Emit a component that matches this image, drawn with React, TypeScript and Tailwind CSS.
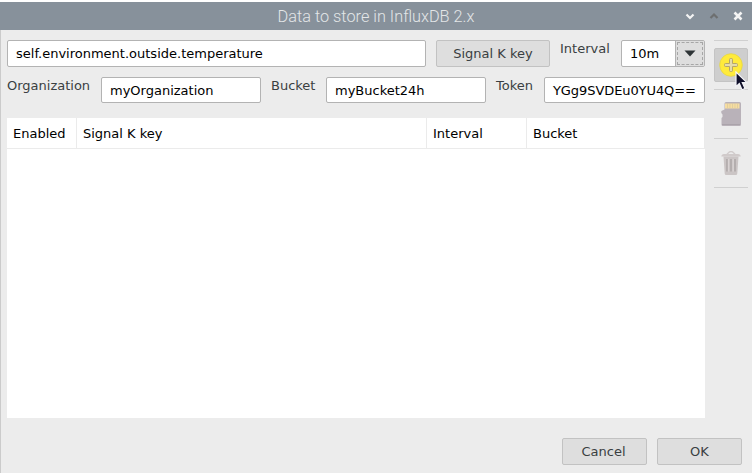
import type { ReactNode } from "react";

function Field({ className, children }: { className: string; children: ReactNode }) {
  return (
    <div
      className={`flex shrink-0 items-center overflow-hidden whitespace-nowrap rounded-xs border border-[#b3b3b3] bg-white px-2 text-black ${className}`}
    >
      {children}
    </div>
  );
}

function Button({ className, children }: { className: string; children: ReactNode }) {
  return (
    <button
      className={`flex h-[27px] shrink-0 items-center justify-center rounded-xs border border-[#c2c2c2] bg-[#dedede] text-[#3a3f42] ${className}`}
    >
      {children}
    </button>
  );
}

function TitleBar() {
  return (
    <header className="relative flex h-7 items-center justify-center bg-[#87919b]">
      <h1 className="pt-0.5 font-['Roboto'] text-[16.3px] font-light text-[#e3e6e8]">Data to store in InfluxDB 2.x</h1>
      <div className="absolute right-2 top-2 flex gap-3">
        <svg width="12" height="12" viewBox="0 0 12 12" fill="none" stroke="#f4f4f4" strokeWidth="2.2">
          <path d="M2.500 4.500 6 8l3.500-3.500" />
        </svg>
        <svg width="12" height="12" viewBox="0 0 12 12" fill="none" stroke="#6d6f70" strokeWidth="2.2">
          <path d="M2.500 8 6 4.500 9.500 8" />
        </svg>
        <svg width="12" height="12" viewBox="0 0 12 12" fill="none" stroke="#f4f4f4" strokeWidth="2.600">
          <path d="m2.500 2.500 7 7m0-7-7 7" />
        </svg>
      </div>
    </header>
  );
}

function Toolbar() {
  return (
    <aside className="flex w-[34px] shrink-0 flex-col border-t border-[#d0d0d0]">
      <div className="relative mt-[7px] flex h-[34px] items-center justify-center rounded-xs border border-[#c4c4c4] bg-[#cecece]">
        <svg width="24" height="24" viewBox="0 0 24 24">
          <circle cx="12" cy="12" r="11.3" fill="#ffeb3b" stroke="#e5d545" strokeWidth=".8" />
          <path
            d="M10.500 6.500q0-1 1-1h1q1 0 1 1v4h4q1 0 1 1v1q0 1-1 1h-4v4q0 1-1 1h-1q-1 0-1-1v-4h-4q-1 0-1-1v-1q0-1 1-1h4z"
            fill="#e4dcaa"
            stroke="#b5a668"
            strokeWidth="1"
          />
        </svg>
        <svg className="absolute left-5 top-[22px] z-10" width="14" height="21" viewBox="0 0 14 21">
          <path
            d="M1 1v14.600l3.300-3 2.700 6.200 3-1.300-2.700-5.900h4.600z"
            fill="#10102a"
            stroke="#f4f4f8"
            strokeWidth="1.200"
          />
        </svg>
      </div>
      <div className="mt-[7px] flex h-[49px] items-center justify-center border-t border-[#d0d0d0]">
        <svg width="20" height="24" viewBox="0 0 20 24">
          <path
            d="M5 0h13.500q1.500 0 1.500 1.500v21q0 1.500-1.500 1.500H2q-1.500 0-1.500-1.500V16l1-1v-2.500L.3 11V9L3.500 7.500V1.500Q3.500 0 5 0z"
            fill="#b9b2b9"
          />
          <path d="M4 1.500h14.500V6.500H4z" fill="#f6dda0" />
          <path d="M6.500 1.500v4.500M9 1.500v4.500M11.500 1.500v4.500M14 1.500v4.500M16.500 1.500v4.500" stroke="#d8c79e" strokeWidth=".7" />
          <path d="M1 22.500h18" stroke="#aaa3aa" />
        </svg>
      </div>
      <div className="flex h-[49px] items-center justify-center border-t border-[#d0d0d0]">
        <svg width="20" height="24" viewBox="0 0 20 24">
          <path d="M6 3.200 8 1.200Q10-.2 12 1.200l2 2" fill="none" stroke="#d1cbcb" strokeWidth="1.400" />
          <path d="M.3 5.600Q.5 3 3 3h14q2.500 0 2.700 2.600z" fill="#d0caca" />
          <path d="M2.500 5.500h15l-1.200 17q-.1 1.500-1.500 1.500H5.200q-1.400 0-1.500-1.500z" fill="#cbc5c5" />
          <path d="M6 8v12.500M10 8v12.500M14 8v12.500" stroke="#aea8a8" strokeWidth="1.600" />
          <path d="M7.400 8v12.500M12.200 8v12.500" stroke="#dad5d5" strokeWidth="1" />
        </svg>
      </div>
      <div className="h-px bg-[#d0d0d0]" />
    </aside>
  );
}

export default function App() {
  return (
    <div className="flex h-[475px] w-[752px] flex-col overflow-hidden bg-white py-0.5 font-['DejaVu_Sans',sans-serif] text-[13px] leading-4 text-[#3a3f42]">
      <TitleBar />
      <main className="flex grow flex-col border-l border-[#cbcbcb] bg-[#ececec] pl-1.5 pr-1 pt-2.5">
        <div className="flex justify-between">
          <div className="flex w-[698px] flex-col">
            <div className="flex">
              <Field className="h-[27px] w-[419px]">self.environment.outside.temperature</Field>
              <Button className="ml-2.5 w-[114px]">Signal K key</Button>
              <label className="ml-2.5 w-[61px] pt-px">Interval</label>
              <div className="flex h-[27px] w-[84px] rounded-xs border border-[#b3b3b3] bg-white text-black">
                <span className="flex w-[53px] items-center pl-2">10m</span>
                <span className="flex grow border-l border-[#b3b3b3] bg-[#dedede] p-px">
                  <span className="flex grow items-center justify-center border border-dashed border-[#a6a6a6]">
                    <svg width="12" height="7" viewBox="0 0 12 7">
                      <path d="M.5.5h11L6 6.500z" fill="#2e3436" />
                    </svg>
                  </span>
                </span>
              </div>
            </div>
            <div className="mt-2.5 flex">
              <label className="w-[94px] pt-px">Organization</label>
              <Field className="h-[26px] w-40 pt-0.5">myOrganization</Field>
              <label className="ml-2.5 w-[55px] pt-px">Bucket</label>
              <Field className="h-[26px] w-40 pt-0.5">myBucket24h</Field>
              <label className="ml-2.5 w-12 pt-px">Token</label>
              <Field className="h-[26px] w-[161px] pt-0.5 tracking-[-0.08px]">
                YGg9SVDEu0YU4Q==
              </Field>
            </div>
            <div className="mt-[15px] h-[300px] bg-white text-black">
              <div className="flex h-[31px] border-b border-[#ebebeb]">
                <div className="flex w-[70px] items-center border-r border-[#ebebeb] pl-1.5 pt-px">Enabled</div>
                <div className="flex w-[350px] items-center border-r border-[#ebebeb] pl-1.5 pt-px">Signal K key</div>
                <div className="flex w-[100px] items-center border-r border-[#ebebeb] pl-1.5 pt-px">Interval</div>
                <div className="flex grow items-center border-r border-[#ebebeb] pl-1.5 pt-px">Bucket</div>
              </div>
            </div>
          </div>
          <Toolbar />
        </div>
        <div className="mt-5 flex justify-end gap-2.5 pr-1.5">
          <Button className="w-[85px] pr-0.5">Cancel</Button>
          <Button className="w-[85px]">OK</Button>
        </div>
      </main>
    </div>
  );
}
